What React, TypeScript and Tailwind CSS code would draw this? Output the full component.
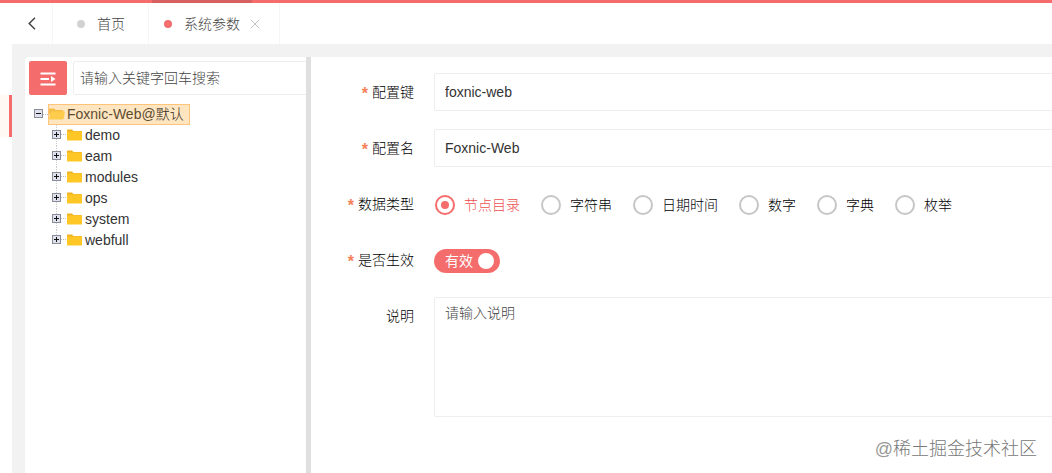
import { useState } from "react";

const TREE = ["demo", "eam", "modules", "ops", "system", "webfull"];
const TYPES = ["节点目录", "字符串", "日期时间", "数字", "字典", "枚举"];

function Expander({ open }: { open?: boolean }) {
  return (
    <svg width="9" height="9" viewBox="0 0 9 9" className="shrink-0" shapeRendering="crispEdges">
      <rect x="0.5" y="0.5" width="8" height="8" fill="#dfe1ee" stroke="#8b8d96" />
      <path d="M2 4.5h5" stroke="#111" />
      {!open && <path d="M4.5 2v5" stroke="#111" />}
    </svg>
  );
}

function Folder({ open }: { open?: boolean }) {
  return (
    <svg width="16" height="12" viewBox="0 0 16 12" className="mb-0.5 shrink-0">
      {open ? (
        <>
          <path d="M0 1.2Q0 .5.7.5H5L6.5 2H13q1.500 0 1.500 1.500v3H0z" fill="#f6bd45" />
          <path d="M0 11.500 1.500 4.500q.3-1.200 1.500-1.200h11.500q1.200 0 1.200 1.200l-.8 5.500q-.3 1.500-1.500 1.500z" fill="#fecc4c" />
        </>
      ) : (
        <>
          <path d="M0 1.2Q0 .5.7.5H5L6.500 2H14q1 0 1 1v3H0z" fill="#f0b222" />
          <path d="M0 2.500h14.500q.5 0 .5.5v8q0 .5-.5.5H.5Q0 11.500 0 11z" fill="#fec726" />
        </>
      )}
    </svg>
  );
}

function Tabs() {
  return (
    <div className="flex h-[41px] shrink-0 bg-white text-sm text-[#444]">
      <div className="flex w-[41px] items-center justify-center border-r border-[#f6f6f6]">
        <svg width="8" height="13" viewBox="0 0 8 13" fill="none" stroke="#444" strokeWidth="1.5">
          <path d="M7 .8 1.200 6.500 7 12.200" />
        </svg>
      </div>
      <div className="flex w-24 items-center border-r border-[#f6f6f6] pl-6">
        <span className="h-2 w-2 rounded-full bg-[#d2d2d2]" />
        <span className="ml-3 leading-5">首页</span>
      </div>
      <div className="flex w-[131px] items-center border-r border-[#f6f6f6] pl-[15px]">
        <span className="h-2 w-2 rounded-full bg-[#f56c6c]" />
        <span className="ml-3 leading-5">系统参数</span>
        <svg width="10" height="10" viewBox="0 0 10 10" stroke="#c2c2c2" className="ml-[10px]">
          <path d="m.8.8 8.400 8.400M9.200.8.8 9.200" />
        </svg>
      </div>
    </div>
  );
}

function TreePanel() {
  return (
    <div className="w-[281px] shrink-0 overflow-hidden rounded-tl-sm bg-white">
      <div className="flex gap-[6px] pt-1 pl-1">
        <button type="button" className="flex h-[34px] w-[38px] shrink-0 items-center justify-center rounded-xs bg-[#f56c6c]">
          <svg width="16" height="14" viewBox="0 0 16 14" fill="none" stroke="#fff" strokeWidth="1.800" className="mt-0.5">
            <path d="M.5 1.500h15M.5 7h8.500M.5 12.500h15" />
            <path d="m11 4 4.500 3-4.500 3z" fill="#fff" stroke="none" />
          </svg>
        </button>
        <input
          className="h-[34px] w-[260px] shrink-0 rounded-xs border border-[#eee] pl-[6px] text-sm text-[#333] outline-none placeholder:text-[#444]"
          placeholder="请输入关键字回车搜索"
        />
      </div>
      <div className="pt-[9px] pl-[9px] text-sm text-[#333]">
        <div className="flex h-[21px] items-center">
          <span className="mb-0.5">
            <Expander open />
          </span>
          <span className="w-[5px] border-t border-dotted border-[#bbb]" />
          <div className="flex h-[21px] w-[142px] items-center border border-[#ffc47a] bg-[#ffe6c0] whitespace-nowrap text-[#5d4c32]">
            <Folder open />
            <span className="ml-[2px] leading-[19px]">
              Foxnic-Web@<span className="text-[#33281a]">默认</span>
            </span>
          </div>
        </div>
        <ul>
          {TREE.map((name, i) => (
            <li key={name} className="flex h-[21px] items-center pl-[18px]">
              <span className="flex h-[21px] w-[9px] flex-col items-center">
                <span className="h-[5px] border-l border-dotted border-[#ccc]" />
                <Expander />
                {i < TREE.length - 1 && <span className="h-[7px] border-l border-dotted border-[#ccc]" />}
              </span>
              <span className="mr-px mb-0.5 w-[5px] border-t border-dotted border-[#bbb]" />
              <Folder />
              <span className="ml-[2px] leading-[21px]">{name}</span>
            </li>
          ))}
        </ul>
      </div>
    </div>
  );
}

function Field({
  label,
  required,
  children,
}: {
  label: string;
  required?: boolean;
  children: React.ReactNode;
}) {
  return (
    <div className="flex items-start">
      <div className="mr-5 flex h-[38px] w-[103px] shrink-0 items-center justify-end text-sm text-black">
        {required && <span className="mr-1 pt-1 text-base leading-4 font-bold text-[#f58158]">*</span>}
        <span className="leading-5">{label}</span>
      </div>
      {children}
    </div>
  );
}

function ConfigForm() {
  const [type, setType] = useState(TYPES[0]);
  const [enabled, setEnabled] = useState(true);
  const box = "shrink-0 w-[700px] rounded-xs border border-[#eee] bg-white px-[10px] text-sm text-[#333] outline-none";

  return (
    <div className="flex min-w-0 flex-1 flex-col gap-[18px] overflow-hidden bg-white pt-4">
      <Field label="配置键" required>
        <input className={`${box} h-[38px]`} defaultValue="foxnic-web" />
      </Field>
      <Field label="配置名" required>
        <input className={`${box} h-[38px]`} defaultValue="Foxnic-Web" />
      </Field>
      <Field label="数据类型" required>
        <div className="flex h-[39px] items-center gap-[21px] pl-px text-sm">
          {TYPES.map((t) => (
            <button
              key={t}
              type="button"
              onClick={() => setType(t)}
              className={`flex items-center gap-[9px] whitespace-nowrap ${t === type ? "text-[#ee4f4f]" : "text-black"}`}
            >
              <span
                className={`flex h-5 w-5 items-center justify-center rounded-full border-2 ${
                  t === type ? "border-[#f56c6c]" : "border-[#c6c6c6]"
                }`}
              >
                {t === type && <span className="h-2 w-2 rounded-full bg-[#f56c6c]" />}
              </span>
              <span className="leading-5">{t}</span>
            </button>
          ))}
        </div>
      </Field>
      <div className="-mt-px">
        <Field label="是否生效" required>
          <button
            type="button"
            onClick={() => setEnabled(!enabled)}
            className="mt-2 flex h-6 w-[66px] items-center justify-between rounded-full bg-[#f56c6c] pr-[6px] pl-[11px] text-sm font-normal text-white"
          >
            <span className="leading-5">{enabled ? "有效" : "无效"}</span>
            <span className="h-4 w-4 rounded-full bg-white" />
          </button>
        </Field>
      </div>
      <Field label="说明">
        <textarea
          className={`${box} h-[120px] resize-none py-[5px] leading-5 placeholder:text-[#444]`}
          placeholder="请输入说明"
        />
      </Field>
    </div>
  );
}

export default function App() {
  return (
    <div className="relative flex h-[473px] w-[1052px] flex-col overflow-hidden bg-[#f2f2f2] font-['Liberation_Sans','Noto_Sans_CJK_SC',sans-serif] font-light">
      <div className="flex h-[3px] shrink-0 bg-[#f56c6c] pl-[152px]">
        <div className="w-[100px] bg-[#d66060]" />
      </div>
      <div className="flex min-h-0 flex-1">
        <div className="w-3 shrink-0 bg-white pt-[92px]">
          <div className="h-[42px] border-r-3 border-[#f56c6c] bg-[#fff8f3]" />
        </div>
        <div className="flex min-w-0 flex-1 flex-col">
          <Tabs />
          <div className="flex min-h-0 flex-1 pt-[13px] pl-[13px]">
            <TreePanel />
            <div className="w-[5px] shrink-0 bg-[#dfdfdf]" />
            <ConfigForm />
          </div>
        </div>
      </div>
      <div className="absolute right-[15px] bottom-[10px] text-lg leading-7 text-[#777]">
        <span className="text-[#999]">@</span>稀土掘金技术社区
      </div>
    </div>
  );
}
